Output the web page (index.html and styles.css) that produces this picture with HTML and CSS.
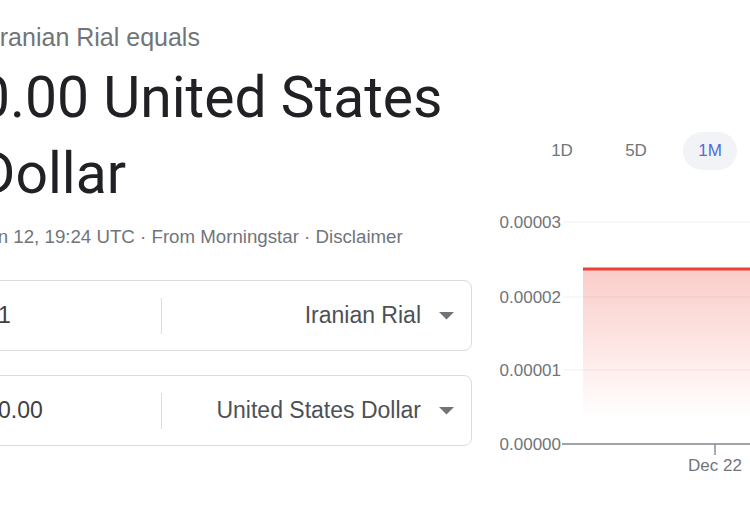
FILE: index.html
```html
<!DOCTYPE html>
<html lang="en">
<head>
<meta charset="utf-8">
<title>Currency converter</title>
<link rel="stylesheet" href="styles.css">
</head>
<body>
<div class="page">
  <section class="converter">
    <div class="subtitle">1 Iranian Rial equals</div>
    <div class="title">0.00 United States Dollar</div>
    <div class="meta">Jan 12, 19:24 UTC · From Morningstar · Disclaimer</div>
    <div class="field">
      <div class="value">1</div>
      <div class="sep"></div>
      <div class="select">
        <span>Iranian Rial</span>
        <svg class="caret" width="15" height="8" viewBox="0 0 15 8"><path d="M0 0h15L7.5 7.5z"/></svg>
      </div>
    </div>
    <div class="field">
      <div class="value">0.00</div>
      <div class="sep"></div>
      <div class="select">
        <span>United States Dollar</span>
        <svg class="caret" width="15" height="8" viewBox="0 0 15 8"><path d="M0 0h15L7.5 7.5z"/></svg>
      </div>
    </div>
  </section>
  <section class="chart">
    <div class="ranges">
      <span class="chip">1D</span>
      <span class="chip">5D</span>
      <span class="chip active">1M</span>
      <span class="chip">1Y</span>
    </div>
    <svg class="plot" width="300" height="300" viewBox="0 0 300 300">
      <defs>
        <linearGradient id="fill" x1="0" y1="0" x2="0" y2="1">
          <stop offset="0" stop-color="#ea4335" stop-opacity="0.27"/>
          <stop offset="0.85" stop-color="#ea4335" stop-opacity="0"/>
        </linearGradient>
      </defs>
      <g class="grid">
        <line x1="68" y1="32" x2="300" y2="32"/>
        <line x1="68" y1="107" x2="300" y2="107"/>
        <line x1="68" y1="180" x2="300" y2="180"/>
      </g>
      <rect x="88" y="79" width="212" height="175" fill="url(#fill)"/>
      <line class="series" x1="88" y1="79" x2="300" y2="79"/>
      <line class="axis" x1="67" y1="254" x2="300" y2="254"/>
      <line class="tick" x1="220" y1="254" x2="220" y2="265"/>
      <g class="labels">
        <text x="66" y="38" text-anchor="end">0.00003</text>
        <text x="66" y="113" text-anchor="end">0.00002</text>
        <text x="66" y="186" text-anchor="end">0.00001</text>
        <text x="66" y="260" text-anchor="end">0.00000</text>
        <text x="220" y="281" text-anchor="middle">Dec 22</text>
      </g>
    </svg>
  </section>
</div>
</body>
</html>
```

FILE: styles.css
```css
html, body {
  margin: 0;
  padding: 0;
  background: #ffffff;
  overflow: hidden;
}

body {
  font-family: "Liberation Sans", Arial, sans-serif;
  width: 750px;
  height: 507px;
}

.page {
  display: flex;
  gap: 23px;
  margin-left: -22px;
  width: 900px;
}

.converter {
  width: 494px;
  flex: none;
  padding-top: 22px;
  display: flex;
  flex-direction: column;
}

.subtitle {
  font-size: 25px;
  line-height: 30px;
  color: #70757a;
  text-indent: -6px;
}

.title {
  margin-top: 8px;
  font-family: Roboto, "Liberation Sans", sans-serif;
  font-size: 57px;
  line-height: 76px;
  color: #202124;
}

.meta {
  margin-top: 13px;
  font-size: 18.7px;
  line-height: 24px;
  color: #70757a;
}

.field {
  display: flex;
  align-items: center;
  height: 71px;
  box-sizing: border-box;
  border: 1px solid #dadce0;
  border-radius: 8px;
  font-size: 23px;
}

.meta + .field {
  margin-top: 31px;
}

.field + .field {
  margin-top: 24px;
}

.value {
  width: 163px;
  padding-left: 19px;
  color: #3c4043;
}

.sep {
  width: 1px;
  height: 36px;
  background: #dadce0;
}

.select {
  flex: 1;
  display: flex;
  align-items: center;
  justify-content: flex-end;
  gap: 18px;
  padding-right: 17px;
  color: #4d5156;
}

.caret {
  fill: #70757a;
  display: block;
}

.chart {
  flex: none;
  width: 300px;
  padding-top: 132px;
}

.ranges {
  display: flex;
  gap: 20px;
  padding-left: 40px;
  height: 38px;
}

.chip {
  width: 54px;
  height: 38px;
  flex: none;
  border-radius: 19px;
  display: flex;
  align-items: center;
  justify-content: center;
  font-size: 17px;
  color: #70757a;
}

.chip.active {
  background: #f1f3f6;
  color: #4f6fdc;
}

.plot {
  display: block;
  margin-top: 20px;
  overflow: visible;
}

.grid line {
  stroke: #f1f1f1;
  stroke-width: 1;
}

.series {
  stroke: #ea4335;
  stroke-width: 3;
}

.axis {
  stroke: #a0a3a7;
  stroke-width: 2;
}

.tick {
  stroke: #8a8e93;
  stroke-width: 1.5;
}

.labels text {
  font-family: "Liberation Sans", Arial, sans-serif;
  font-size: 17px;
  fill: #70757a;
}
```
